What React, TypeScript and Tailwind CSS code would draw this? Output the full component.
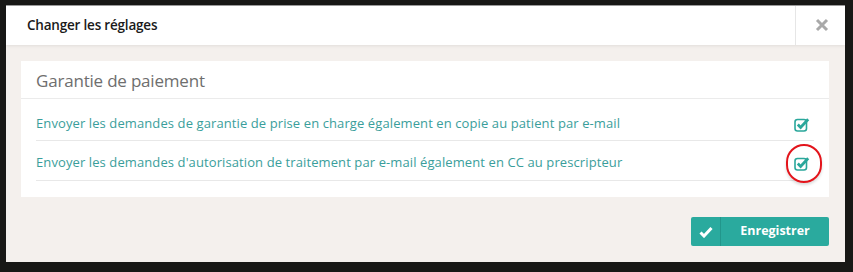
import React from 'react';

function CheckSquare() {
  return (
    <svg width="16" height="15" viewBox="0 0 16 15" className="block">
      <rect x="1" y="2.5" width="11.5" height="11.5" rx="2.5" fill="none" stroke="#2aa79b" strokeWidth="1.6" />
      <path d="M3.8 7.6 L6.6 10.4 L14.2 2.2" fill="none" stroke="#2aa79b" strokeWidth="2.8" strokeLinecap="butt" />
    </svg>
  );
}

export default function App() {
  const rows = [
    { label: 'Envoyer les demandes de garantie de prise en charge également en copie au patient par e-mail', marked: false },
    { label: "Envoyer les demandes d'autorisation de traitement par e-mail également en CC au prescripteur", marked: true },
  ];

  return (
    <div className="h-[272px] w-[853px] bg-[#181816] pl-[6px] pr-[8px] pt-[5px] pb-[10px] font-['Open_Sans',sans-serif]">
      <div className="flex h-full flex-col bg-[#f4f0ed]">
        {/* Header */}
        <div className="flex h-[40px] items-stretch border-t border-[#9a9a9a] bg-white shadow-[0_1px_3px_rgba(0,0,0,0.08)]">
          <div className="flex flex-1 items-center pl-[21px] text-[13.5px] font-semibold tracking-[-0.2px] text-[#1a1a1a]">
            Changer les réglages
          </div>
          <div className="flex w-[50px] items-center justify-center border-l border-[#e6e6e6] pb-[2px] pl-[2px]">
            <svg width="14" height="14" viewBox="0 0 14 14">
              <path d="M2 2 L12 12 M12 2 L2 12" stroke="#a9a9a9" strokeWidth="3" />
            </svg>
          </div>
        </div>

        {/* Body */}
        <div className="flex flex-1 flex-col px-[15px] pt-[16px] pb-[16px]">
          <div className="mr-px bg-white pb-[16px]">
            <div className="flex h-[38px] items-center border-b border-[#ebebeb] px-[15px] pt-[2px] text-[17px] tracking-[-0.2px] text-[#6e6e6e]">
              Garantie de paiement
            </div>
            <div className="px-[15px]">
              {rows.map((row, i) => (
                <div
                  key={row.label}
                  className={`flex items-center justify-between border-b border-[#e8e8e8] pr-[4px] ${i === 0 ? 'h-[42px] pt-[9px]' : 'h-[40px] pt-[5px]'}`}
                >
                  <span className="text-[13px] tracking-[0.1px] text-[#3a9e9b]">{row.label}</span>
                  <span className="relative">
                    <CheckSquare />
                    {row.marked && (
                      <span className="absolute left-[-8px] top-[-12px] h-[39px] w-[36px] rounded-full border-2 border-[#e3141b] shadow-[0_2px_3px_rgba(0,0,0,0.15)]" />
                    )}
                  </span>
                </div>
              ))}
            </div>
          </div>

          <div className="mt-auto flex justify-end pr-px">
            <button className="flex h-[29px] w-[138px] items-stretch overflow-hidden rounded-[2px] bg-[#2aaa9e] text-white">
              <span className="flex w-[30px] items-center justify-center border-r border-[#22968b]">
                <svg width="14" height="12" viewBox="0 0 14 12">
                  <path d="M1.5 6.5 L5 10 L12.5 2" fill="none" stroke="white" strokeWidth="3" />
                </svg>
              </span>
              <span className="flex flex-1 items-center justify-center text-[12.5px] font-bold">Enregistrer</span>
            </button>
          </div>
        </div>
      </div>
    </div>
  );
}
